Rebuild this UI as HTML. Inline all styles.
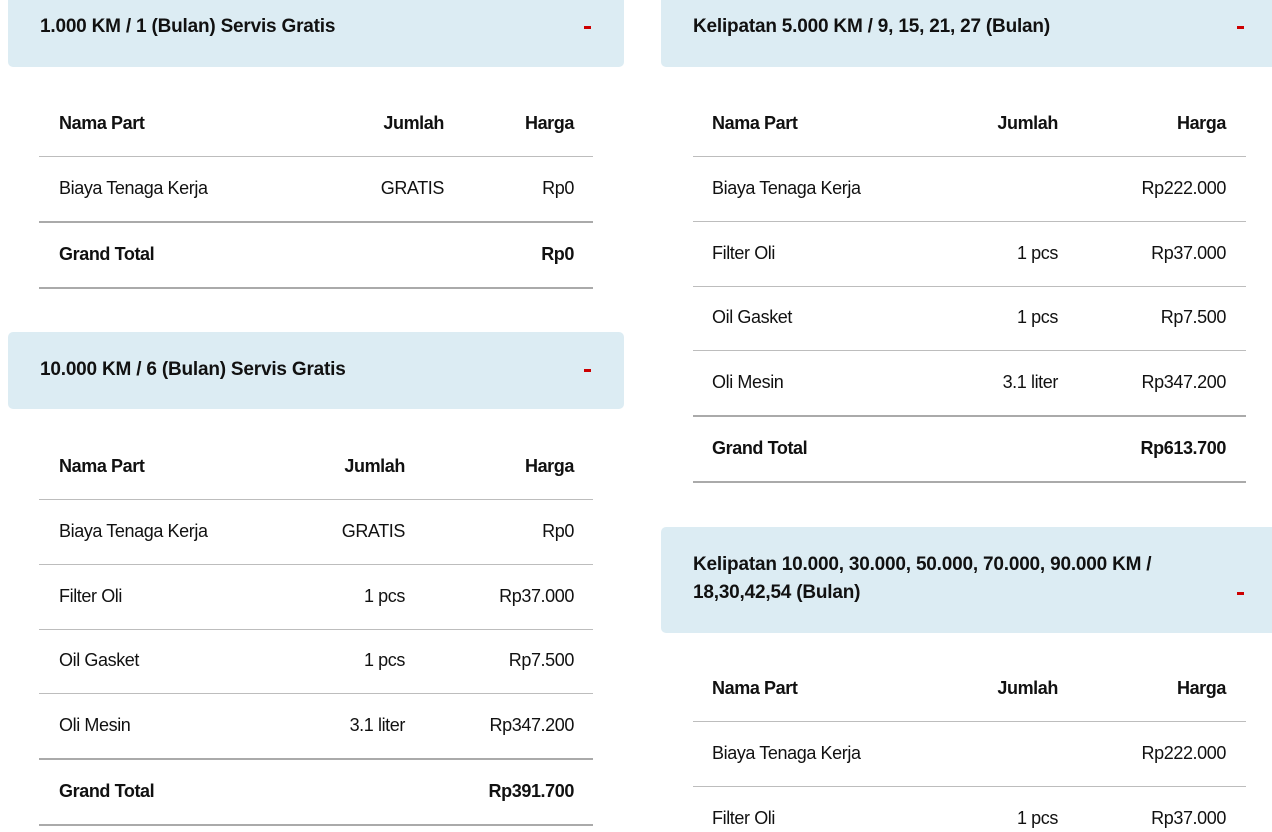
<!DOCTYPE html>
<html><head><meta charset="utf-8"><style>
body{margin:0;width:1272px;height:832px;overflow:hidden;background:#fff;position:relative;font-family:"Liberation Sans Narrow","Liberation Sans",sans-serif;color:#111}
div{position:absolute;white-space:nowrap}
.h{background:#dcecf3;border-radius:5px}
.t{height:22px;line-height:22px;font-size:18px;letter-spacing:-0.4px}
.ht{font-size:19px;letter-spacing:-0.2px}
.b{font-weight:bold}
.m{background:#c00;width:7px;height:3px}
.l1{height:1px;background:#bdbdbd}
.l2{height:2px;background:#aaa}
.r{text-align:right}
</style></head><body>
<div class="h" style="left:8px;top:-6px;width:616px;height:73px"></div>
<div class="t b ht" style="left:40px;top:16px">1.000 KM / 1 (Bulan) Servis Gratis</div>
<div class="m" style="left:584px;top:26px"></div>
<div class="t b" style="left:59px;top:112px">Nama Part</div>
<div class="t b r" style="right:828px;top:112px">Jumlah</div>
<div class="t b r" style="right:698px;top:112px">Harga</div>
<div class="l1" style="left:39px;top:156px;width:554px"></div>
<div class="t" style="left:59px;top:177px">Biaya Tenaga Kerja</div>
<div class="t r" style="right:828px;top:177px">GRATIS</div>
<div class="t r" style="right:698px;top:177px">Rp0</div>
<div class="l2" style="left:39px;top:221px;width:554px"></div>
<div class="t b" style="left:59px;top:243px">Grand Total</div>
<div class="t b r" style="right:698px;top:243px">Rp0</div>
<div class="l2" style="left:39px;top:287px;width:554px"></div>
<div class="h" style="left:8px;top:332px;width:616px;height:77px"></div>
<div class="t b ht" style="left:40px;top:359px">10.000 KM / 6 (Bulan) Servis Gratis</div>
<div class="m" style="left:584px;top:369px"></div>
<div class="t b" style="left:59px;top:455px">Nama Part</div>
<div class="t b r" style="right:867px;top:455px">Jumlah</div>
<div class="t b r" style="right:698px;top:455px">Harga</div>
<div class="l1" style="left:39px;top:499px;width:554px"></div>
<div class="t" style="left:59px;top:520px">Biaya Tenaga Kerja</div>
<div class="t r" style="right:867px;top:520px">GRATIS</div>
<div class="t r" style="right:698px;top:520px">Rp0</div>
<div class="l1" style="left:39px;top:564px;width:554px"></div>
<div class="t" style="left:59px;top:585px">Filter Oli</div>
<div class="t r" style="right:867px;top:585px">1 pcs</div>
<div class="t r" style="right:698px;top:585px">Rp37.000</div>
<div class="l1" style="left:39px;top:629px;width:554px"></div>
<div class="t" style="left:59px;top:649px">Oil Gasket</div>
<div class="t r" style="right:867px;top:649px">1 pcs</div>
<div class="t r" style="right:698px;top:649px">Rp7.500</div>
<div class="l1" style="left:39px;top:693px;width:554px"></div>
<div class="t" style="left:59px;top:714px">Oli Mesin</div>
<div class="t r" style="right:867px;top:714px">3.1 liter</div>
<div class="t r" style="right:698px;top:714px">Rp347.200</div>
<div class="l2" style="left:39px;top:758px;width:554px"></div>
<div class="t b" style="left:59px;top:780px">Grand Total</div>
<div class="t b r" style="right:698px;top:780px">Rp391.700</div>
<div class="l2" style="left:39px;top:824px;width:554px"></div>
<div class="h" style="left:661px;top:-6px;width:620px;height:73px"></div>
<div class="t b ht" style="left:693px;top:16px">Kelipatan 5.000 KM / 9, 15, 21, 27 (Bulan)</div>
<div class="m" style="left:1237px;top:26px"></div>
<div class="t b" style="left:712px;top:112px">Nama Part</div>
<div class="t b r" style="right:214px;top:112px">Jumlah</div>
<div class="t b r" style="right:46px;top:112px">Harga</div>
<div class="l1" style="left:693px;top:156px;width:553px"></div>
<div class="t" style="left:712px;top:177px">Biaya Tenaga Kerja</div>
<div class="t r" style="right:46px;top:177px">Rp222.000</div>
<div class="l1" style="left:693px;top:221px;width:553px"></div>
<div class="t" style="left:712px;top:242px">Filter Oli</div>
<div class="t r" style="right:214px;top:242px">1 pcs</div>
<div class="t r" style="right:46px;top:242px">Rp37.000</div>
<div class="l1" style="left:693px;top:286px;width:553px"></div>
<div class="t" style="left:712px;top:306px">Oil Gasket</div>
<div class="t r" style="right:214px;top:306px">1 pcs</div>
<div class="t r" style="right:46px;top:306px">Rp7.500</div>
<div class="l1" style="left:693px;top:350px;width:553px"></div>
<div class="t" style="left:712px;top:371px">Oli Mesin</div>
<div class="t r" style="right:214px;top:371px">3.1 liter</div>
<div class="t r" style="right:46px;top:371px">Rp347.200</div>
<div class="l2" style="left:693px;top:415px;width:553px"></div>
<div class="t b" style="left:712px;top:437px">Grand Total</div>
<div class="t b r" style="right:46px;top:437px">Rp613.700</div>
<div class="l2" style="left:693px;top:481px;width:553px"></div>
<div class="h" style="left:661px;top:527px;width:620px;height:106px"></div>
<div class="t b ht" style="left:693px;top:554px">Kelipatan 10.000, 30.000, 50.000, 70.000, 90.000 KM /</div>
<div class="t b ht" style="left:693px;top:582px">18,30,42,54 (Bulan)</div>
<div class="m" style="left:1237px;top:592px"></div>
<div class="t b" style="left:712px;top:677px">Nama Part</div>
<div class="t b r" style="right:214px;top:677px">Jumlah</div>
<div class="t b r" style="right:46px;top:677px">Harga</div>
<div class="l1" style="left:693px;top:721px;width:553px"></div>
<div class="t" style="left:712px;top:742px">Biaya Tenaga Kerja</div>
<div class="t r" style="right:46px;top:742px">Rp222.000</div>
<div class="l1" style="left:693px;top:786px;width:553px"></div>
<div class="t" style="left:712px;top:807px">Filter Oli</div>
<div class="t r" style="right:214px;top:807px">1 pcs</div>
<div class="t r" style="right:46px;top:807px">Rp37.000</div>
</body></html>
